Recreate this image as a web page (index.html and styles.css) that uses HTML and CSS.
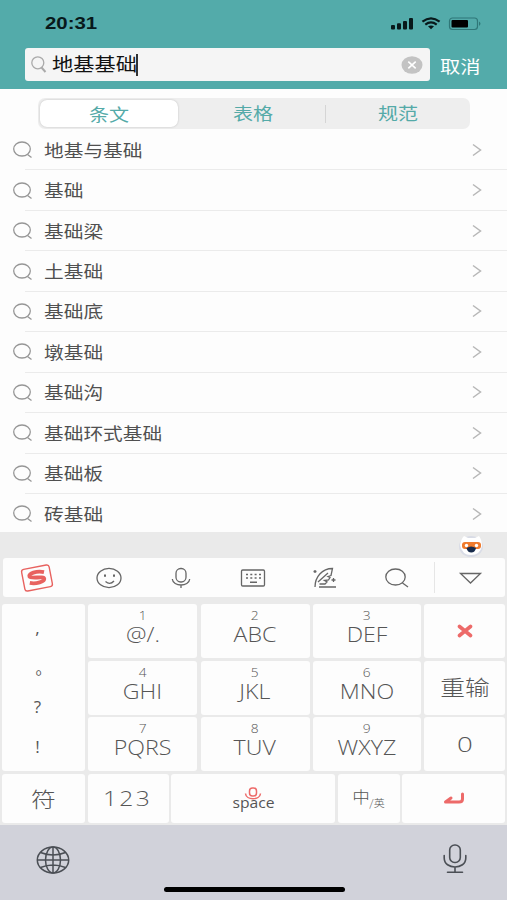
FILE: index.html
```html
<!DOCTYPE html>
<html lang="zh-CN">
<head>
<meta charset="utf-8">
<meta name="viewport" content="width=device-width, initial-scale=1">
<title>搜索</title>
<link rel="stylesheet" href="styles.css">
</head>
<body>
<svg class="defs" aria-hidden="true">
  <symbol id="search" viewBox="0 0 20 18"><ellipse cx="9" cy="8" rx="8.3" ry="7"/><path d="M14.5 13.5L18.5 16.500"/></symbol>
  <symbol id="chev" viewBox="0 0 10 14"><path d="M1 1.5L8.5 7L1 12.5"/></symbol>
</svg>
<header class="header">
  <div class="status">
    <span class="time">20:31</span>
    <svg class="status-icons" viewBox="0 0 92 16">
      <g fill="#08191b"><rect x="1" y="9" width="4" height="4.5" rx="1"/><rect x="7" y="7.2" width="4" height="6.3" rx="1"/><rect x="13" y="5" width="4" height="8.5" rx="1"/><rect x="19" y="2" width="4" height="11.5" rx="1"/><path d="M38 10.3L41 13.3L44 10.3Q41 8.5 38 10.3"/></g>
      <path d="M32.4 5.6Q41-1 49.6 5.6M35.3 8.6Q41 4.2 46.7 8.6" fill="none" stroke="#08191b" stroke-width="2.2"/>
      <rect x="59.5" y="2" width="28" height="11.5" rx="3" fill="none" stroke="#2f7778" stroke-width="1.2"/><rect x="61.5" y="4" width="16.500" height="7.500" rx="1" fill="#000"/><path d="M89 5.500Q92 7.700 89 10z" fill="#2f7778"/>
    </svg>
  </div>
  <div class="searchbar">
    <div class="field">
      <svg class="field-icon" viewBox="0 0 16 18"><ellipse cx="6.800" cy="6.800" rx="6" ry="6"/><path d="M10.500 11.500L14.500 16" stroke-width="2"/></svg>
      <span class="query"><span class="wide">地基基础</span></span><i class="caret"></i>
      <svg class="clear" viewBox="0 0 22 18"><ellipse cx="11" cy="9" rx="10.500" ry="8.800"/><path d="M7.300 5.700L14.700 12.300M14.700 5.700L7.300 12.300"/></svg>
    </div>
    <span class="cancel"><span class="wide">取消</span></span>
  </div>
</header>
<nav class="tabs">
  <div class="tab active"><span>条文</span></div>
  <div class="tab"><span>表格</span></div>
  <div class="tab split"><span>规范</span></div>
</nav>
<main class="list">
  <div class="row"><svg class="mag"><use href="#search"/></svg><div class="item"><span>地基与基础</span><svg class="chev"><use href="#chev"/></svg></div></div>
  <div class="row"><svg class="mag"><use href="#search"/></svg><div class="item"><span>基础</span><svg class="chev"><use href="#chev"/></svg></div></div>
  <div class="row"><svg class="mag"><use href="#search"/></svg><div class="item"><span>基础梁</span><svg class="chev"><use href="#chev"/></svg></div></div>
  <div class="row"><svg class="mag"><use href="#search"/></svg><div class="item"><span>土基础</span><svg class="chev"><use href="#chev"/></svg></div></div>
  <div class="row"><svg class="mag"><use href="#search"/></svg><div class="item"><span>基础底</span><svg class="chev"><use href="#chev"/></svg></div></div>
  <div class="row"><svg class="mag"><use href="#search"/></svg><div class="item"><span>墩基础</span><svg class="chev"><use href="#chev"/></svg></div></div>
  <div class="row"><svg class="mag"><use href="#search"/></svg><div class="item"><span>基础沟</span><svg class="chev"><use href="#chev"/></svg></div></div>
  <div class="row"><svg class="mag"><use href="#search"/></svg><div class="item"><span>基础环式基础</span><svg class="chev"><use href="#chev"/></svg></div></div>
  <div class="row"><svg class="mag"><use href="#search"/></svg><div class="item"><span>基础板</span><svg class="chev"><use href="#chev"/></svg></div></div>
  <div class="row"><svg class="mag"><use href="#search"/></svg><div class="item"><span>砖基础</span><svg class="chev"><use href="#chev"/></svg></div></div>
</main>
<section class="keyboard">
  <div class="mascot">
    <svg viewBox="0 0 26 24"><ellipse cx="13" cy="12.500" rx="12" ry="10.500" fill="#d9dce6"/><path d="M2 11Q3 5 6 2L10 4H17L21 2Q24 6 24 12Q22 21 13 21Q4 21 2 11" fill="#fff"/><rect x="4" y="8" width="19" height="7" rx="3" fill="#ef7a2c"/><circle cx="8.500" cy="11.500" r="1.700" fill="#fff"/><circle cx="18.500" cy="11.500" r="1.700" fill="#fff"/><path d="M8.500 14Q13 11 18 14Q17 18.500 13.300 18.500Q9.500 18.500 8.500 14" fill="#172b4b"/></svg>
  </div>
  <div class="toolbar">
    <svg class="tool" viewBox="0 0 40 34"><g transform="rotate(-11 20 17)"><rect x="6" y="6" width="28" height="22" rx="2.500" fill="none" stroke="#e8625f" stroke-width="1.400"/><path d="M28 12.500C21 9.500 12 11 12.800 14C13.500 17 27 16 27 19C27 22 18 23 12 20.500" fill="none" stroke="#e8625f" stroke-width="3.800"/></g></svg>
    <svg class="tool line" viewBox="0 0 40 34"><ellipse cx="20" cy="17" rx="12" ry="9.700"/><path d="M16 13.500V15.700M25 13.500V15.700" stroke-width="2"/><path d="M16.500 20.500Q21 24.500 25 20"/></svg>
    <svg class="tool line" viewBox="0 0 40 34"><rect x="15" y="7.500" width="10" height="13.500" rx="4.700"/><path d="M11.300 18C12 26 28 26 28.700 18M20 24V27"/></svg>
    <svg class="tool line" viewBox="0 0 40 34"><rect x="8.500" y="9" width="23" height="16" rx="1.200"/><path d="M13 13.500H15M17.300 13.500H19.300M21.600 13.500H23.600M26 13.500H28M13 17H15M17.300 17H19.300M21.600 17H23.600M26 17H28M17 21.200H24" stroke-width="1.600"/></svg>
    <svg class="tool line" viewBox="0 0 40 34"><path d="M10 26C10 16 17 7.500 27.500 7.500L26 14.500L23 15.500L25 16.500L23.500 19L19.500 19.500L22 21L20 23H14.500M13 21L23 12M14 26H31M28.500 17V21M26.500 19H30.500M10 9V12M8.500 10.500H11.500"/></svg>
    <svg class="tool line" viewBox="0 0 40 34"><ellipse cx="18.500" cy="16" rx="9.700" ry="8"/><path d="M25.500 22L31 26"/></svg>
    <div class="collapse"><svg class="tool line" viewBox="0 0 40 34"><path d="M10.500 12.500H30.500L20.500 22Z"/></svg></div>
  </div>
  <div class="keys">
    <div class="key punct"><span>,</span><span class="stop">。</span><span>?</span><span>!</span></div>
    <div class="key"><small>1</small><b>@/.</b></div>
    <div class="key"><small>2</small><b>ABC</b></div>
    <div class="key"><small>3</small><b>DEF</b></div>
    <div class="key"><svg class="del" viewBox="0 0 16 14"><path d="M2.500 2.500L13.500 11.500M13.500 2.500L2.500 11.500"/></svg></div>
    <div class="key"><small>4</small><b>GHI</b></div>
    <div class="key"><small>5</small><b>JKL</b></div>
    <div class="key"><small>6</small><b>MNO</b></div>
    <div class="key"><span class="cjk redo">重输</span></div>
    <div class="key"><small>7</small><b>PQRS</b></div>
    <div class="key"><small>8</small><b>TUV</b></div>
    <div class="key"><small>9</small><b>WXYZ</b></div>
    <div class="key"><b class="zero">0</b></div>
  </div>
  <div class="bottom">
    <div class="key"><span class="cjk">符</span></div>
    <div class="key"><b class="num">123</b></div>
    <div class="key space"><svg viewBox="0 0 18 14"><rect x="5.500" y="1" width="7" height="8" rx="3"/><path d="M1.500 6.500C2 13.500 16 13.500 16.500 6.500"/></svg><span>space</span></div>
    <div class="key lang"><span class="zh">中</span><span class="en">/英</span></div>
    <div class="key"><svg class="enter" viewBox="0 0 22 13"><path d="M19.500 2V7Q19.500 10 16 10H2.500L8 6"/></svg></div>
  </div>
</section>
<footer class="footer">
  <svg class="globe" viewBox="0 0 34 28"><ellipse cx="17" cy="14" rx="15.700" ry="13"/><ellipse cx="17" cy="14" rx="7.500" ry="13"/><path d="M17 1V27M1.300 14H32.700M4.500 6.500Q17 11.500 29.500 6.500M4.500 21.500Q17 16.500 29.500 21.500"/></svg>
  <i class="home"></i>
  <svg class="mic" viewBox="0 0 24 30"><rect x="6.700" y="1" width="10.600" height="17.500" rx="5"/><path d="M1.200 11.500V14C1.200 26 22.800 26 22.800 14V11.500M12 23V28.300M4.500 28.300H19.500"/></svg>
</footer>
</body>
</html>
```
FILE: styles.css
```css
* { box-sizing: border-box; }
body {
  margin: 0;
  width: 507px;
  height: 900px;
  overflow: hidden;
  display: flex;
  flex-direction: column;
  background: #fdfdfd;
  font-family: "Noto Sans", "Noto Sans CJK SC", sans-serif;
}
svg { display: block; flex: none; }
.defs { width: 0; height: 0; position: absolute; }

.header { height: 89px; background: #53abaa; flex: none; }
.status { height: 48px; padding: 0 22px 0 45px; display: flex; justify-content: space-between; align-items: center; }
.time {
  font: 700 17px/20px "Liberation Sans", sans-serif;
  color: #08191b;
  transform: scaleX(1.2);
  transform-origin: left;
}
.status-icons { width: 92px; height: 16px; margin-right: 3px; }
.searchbar { display: flex; padding-left: 25px; height: 33px; }
.field {
  width: 405px;
  background: #f5f5f5;
  border-radius: 3px;
  display: flex;
  align-items: center;
  padding: 0 7px 0 6px;
}
.field-icon { width: 16px; height: 18px; fill: none; stroke: #aaa; stroke-width: 1.3; }
.wide { display: inline-block; white-space: nowrap; transform: scaleX(1.18); transform-origin: left; }
.query { width: 84px; margin: -3px 0 0 5px; font: 18px/30px "Noto Sans CJK SC", sans-serif; color: #111; }
.caret { width: 1.5px; height: 22px; background: #333; }
.clear { width: 22px; height: 18px; margin-left: auto; fill: #c3c3c3; stroke: #fff; stroke-width: 1.6; }
.clear ellipse { stroke: none; }
.cancel { margin: 3px 0 0 10px; font: 17.2px/30px "Noto Sans CJK SC", sans-serif; color: #fff; }

.tabs {
  flex: none;
  display: grid;
  grid-template-columns: 142px 145px 145px;
  width: 432px;
  height: 31px;
  margin: 9px 0 0 38px;
  background: #eee;
  border-radius: 7px;
}
.tab {
  display: flex;
  align-items: center;
  justify-content: center;
  color: #54aaa8;
  font: 17px/26px "Noto Sans CJK SC", sans-serif;
  padding-bottom: 1px;
}
.tab span { transform: scaleX(1.18); }
.tab.active { background: #fff; border-radius: 7px; margin: 2px; padding: 0; box-shadow: 0 0 2px #bbb; }
.tab.split { background: linear-gradient(#d5d5d5, #d5d5d5) 0 50% / 1px 18px no-repeat; }

.list { height: 403px; overflow: hidden; flex: none; padding-top: 1px; }
.row { height: 40.45px; display: flex; align-items: center; padding-left: 13px; }
.mag { width: 20px; height: 18px; fill: none; stroke: #969696; stroke-width: 1.3; }
.item {
  flex: 1;
  height: 100%;
  margin-left: -8px;
  padding: 0 25px 0 19px;
  display: flex;
  align-items: center;
  justify-content: space-between;
  border-bottom: 1px solid #ebebeb;
  color: #505050;
  font: 16.7px/24px "Noto Sans CJK SC", sans-serif;
}
.item span { transform: scaleX(1.18); transform-origin: left; }
.row:last-child .item { border-color: transparent; }
.chev { width: 10px; height: 14px; fill: none; stroke: #b7b7b7; stroke-width: 1.5; }

.keyboard { height: 293px; flex: none; background: #eaeaea; padding: 0 2px; }
.mascot { height: 26px; padding: 2px 21px 0 0; display: flex; justify-content: flex-end; }
.mascot svg { width: 26px; height: 24px; }
.toolbar {
  height: 39px;
  margin: 0 0 7px 1px;
  background: #fdfdfd;
  border-radius: 3px;
  display: flex;
  align-items: center;
  padding-left: 14px;
  gap: 32px;
}
.tool { width: 40px; height: 34px; }
.line { fill: none; stroke: #666; stroke-width: 1.3; }
.collapse { width: 71px; height: 31px; margin-left: -15px; display: flex; align-items: center; justify-content: center; border-left: 1px solid #e6e6e6; }
.keys {
  display: grid;
  grid-template-columns: 83px 109px 109px 108px 81px;
  column-gap: 3.25px;
  grid-template-rows: repeat(3, 54px);
  row-gap: 2.5px;
}
.key {
  background: #fdfdfd;
  border-radius: 3px;
  display: flex;
  flex-direction: column;
  align-items: center;
  justify-content: center;
  color: #555;
}
.key small { font: 300 12.5px/13px "Open Sans", sans-serif; margin-top: -6px; transform: scaleX(1.1); }
.key b { font: 300 20.5px/25px "Open Sans", sans-serif; transform: scaleX(1.13); }
.punct { grid-row: span 3; justify-content: flex-start; gap: 19.5px; padding: 14px 12px 0 0; font: 17px/20px "Open Sans", "Noto Sans CJK SC", sans-serif; }
.punct .stop { padding-left: 12px; font-size: 16px; }
.cjk { font: 300 21px/28px "Noto Sans CJK SC", sans-serif; transform: scaleX(1.18); }
.redo { margin-top: -3px; }
.key b.zero { transform: scaleX(1.35); }
.del { width: 16px; height: 14px; fill: none; stroke: #ed6a69; stroke-width: 3.6; stroke-linecap: round; }
.bottom {
  margin-top: 3px;
  height: 49px;
  display: grid;
  grid-template-columns: 83px 81px 164px 62px 103px;
  column-gap: 2.5px;
}
.key b.num { letter-spacing: 2px; transform: scaleX(1.2); }
.bottom .cjk { margin-top: -2px; }
.space svg { width: 18px; height: 14px; fill: none; stroke: #ed6a69; stroke-width: 1.5; }
.space span { font: 14.5px/16px "Open Sans", sans-serif; margin-top: -6px; transform: scaleX(1.08); }
.key.lang { flex-direction: row; }
.zh { font: 300 16px/20px "Noto Sans CJK SC", sans-serif; margin-top: -5px; transform: scaleX(1.1); }
.en { font: 300 10px/12px "Noto Sans CJK SC", sans-serif; margin: 8px 0 0 1px; transform: scaleX(1.1); }
.enter { width: 22px; height: 13px; fill: none; stroke: #ed6a69; stroke-width: 3; stroke-linejoin: round; stroke-linecap: round; }

.footer {
  height: 75px;
  background: #d1d2da;
  display: flex;
  padding: 0 40px 0 36px;
}
.globe { width: 34px; height: 28px; margin-top: 21px; fill: none; stroke: #4b4f55; stroke-width: 1.5; }
.mic { width: 24px; height: 30px; margin: 19px 0 0 auto; fill: none; stroke: #4b4f55; stroke-width: 1.6; stroke-linecap: round; }
.home { width: 181px; height: 5px; margin: 62px 0 0 93.500px; border-radius: 3px; background: #000; }
```
